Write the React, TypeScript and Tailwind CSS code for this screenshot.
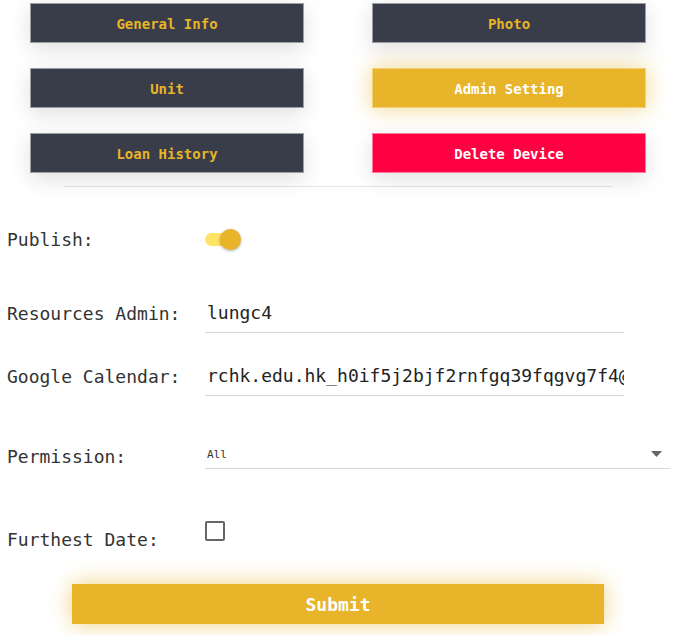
import React, { useState } from "react";

const mono = "font-['DejaVu_Sans_Mono','Liberation_Mono',monospace]";

const TabButton = ({
  label,
  variant,
}: {
  label: string;
  variant: "dark" | "active" | "danger";
}) => {
  const styles = {
    dark: "bg-[#383d49] text-[#e8b429] border-[#9c9ea4] shadow-[0_6px_22px_rgba(0,0,0,0.13)]",
    active:
      "bg-[#e8b429] text-white border-[#f3d27a] shadow-[0_0_22px_rgba(232,180,41,0.55)]",
    danger:
      "bg-[#ff0042] text-white border-[#ff7a99] shadow-[0_6px_22px_rgba(0,0,0,0.13)]",
  };
  return (
    <button
      className={`w-[274px] h-[40px] border pt-[3px] text-[14px] font-semibold ${styles[variant]}`}
    >
      {label}
    </button>
  );
};

export default function App() {
  const [publish, setPublish] = useState(true);
  const [furthest, setFurthest] = useState(false);

  return (
    <div className={`w-[678px] h-[635px] bg-white overflow-hidden ${mono}`}>
      <div className="pt-[3px] flex flex-col gap-[25px]">
        <div className="flex gap-[68px] pl-[30px]">
          <TabButton label="General Info" variant="dark" />
          <TabButton label="Photo" variant="dark" />
        </div>
        <div className="flex gap-[68px] pl-[30px]">
          <TabButton label="Unit" variant="dark" />
          <TabButton label="Admin Setting" variant="active" />
        </div>
        <div className="flex gap-[68px] pl-[30px]">
          <TabButton label="Loan History" variant="dark" />
          <TabButton label="Delete Device" variant="danger" />
        </div>
      </div>

      <div className="ml-[64px] mr-[66px] mt-[13px] border-t border-[#e6e6e6]" />

      <div className="pl-[7px] text-[18px] text-[#333]">
        <div className="mt-[34px] h-[36px] flex items-center">
          <span className="w-[198px]">Publish:</span>
          <button
            onClick={() => setPublish(!publish)}
            className="relative w-[36px] h-[20px] flex items-center"
          >
            <span className="block w-[34px] h-[13px] rounded-full bg-[#fde466]" />
            <span className="absolute right-0 top-0 w-[21px] h-[21px] rounded-full bg-[#e8b429] shadow-[0_1px_3px_rgba(0,0,0,0.3)]" />
          </button>
        </div>

        <div className="mt-[40px] flex items-center h-[36px]">
          <span className="w-[198px] pb-[4px]">Resources Admin:</span>
          <input
            defaultValue="lungc4"
            className="w-[419px] h-[36px] border-b border-[#d9d9d9] outline-none pl-[2px] pb-[4px] text-[#222]"
          />
        </div>

        <div className="mt-[27px] flex items-center h-[36px]">
          <span className="w-[198px] pb-[4px]">Google Calendar:</span>
          <input
            defaultValue="rchk.edu.hk_h0if5j2bjf2rnfgq39fqgvg7f4@group.calendar.google.com"
            className="w-[419px] h-[36px] border-b border-[#d9d9d9] outline-none pl-[2px] pb-[4px] text-[#222]"
          />
        </div>

        <div className="mt-[43px] flex items-end">
          <span className="w-[198px] leading-[24px]">Permission:</span>
          <div className="w-[465px] h-[30px] border-b border-[#d9d9d9] flex items-center justify-between pl-[2px] pr-[8px]">
            <span className="text-[11px] text-[#333] mt-[3px]">All</span>
            <svg width="11" height="6" viewBox="0 0 11 6">
              <path d="M0 0h11L5.5 6z" fill="#666" />
            </svg>
          </div>
        </div>

        <div className="mt-[52px] flex items-start">
          <span className="w-[198px] mt-[7px] leading-[24px]">Furthest Date:</span>
          <button
            onClick={() => setFurthest(!furthest)}
            className="w-[20px] h-[20px] border-2 border-[#666] rounded-[2px]"
          />
        </div>
      </div>

      <div className="mt-[32px] pl-[72px]">
        <button className="w-[532px] h-[40px] bg-[#e8b429] text-white text-[18px] font-semibold shadow-[0_0_22px_rgba(232,180,41,0.6)]">
          Submit
        </button>
      </div>
    </div>
  );
}
